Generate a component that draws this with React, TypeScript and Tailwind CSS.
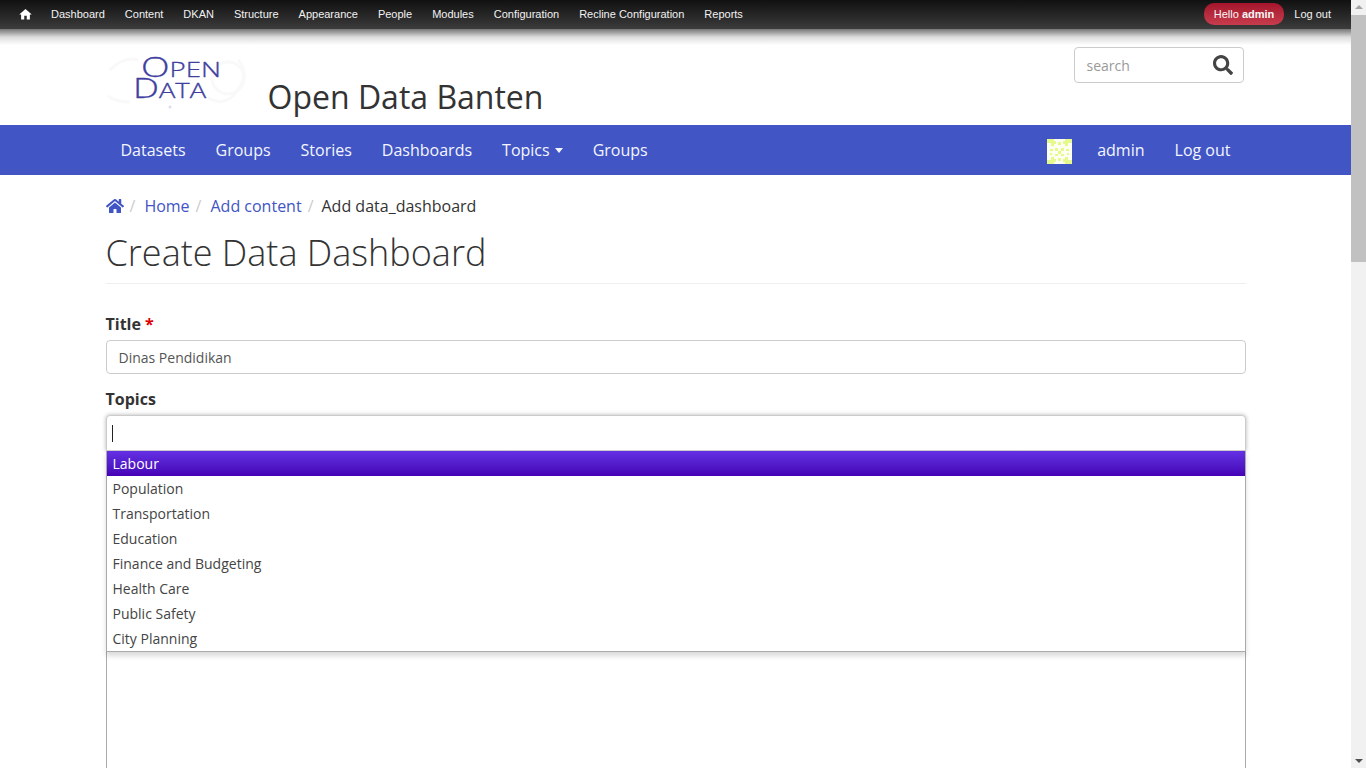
import React from 'react';
import { FaHome, FaSearch } from 'react-icons/fa';
import { MdHome } from 'react-icons/md';

const toolbarLinks = ['Dashboard', 'Content', 'DKAN', 'Structure', 'Appearance', 'People', 'Modules', 'Configuration', 'Recline Configuration', 'Reports'];
const topics = ['Population', 'Transportation', 'Education', 'Finance and Budgeting', 'Health Care', 'Public Safety', 'City Planning'];

const AdminToolbar: React.FC = () => (
  <div className="flex h-[29px] items-center bg-gradient-to-b from-[#111111] to-[#3c3c3c] pb-[1px] font-['Liberation_Sans',sans-serif] text-[11px] text-[#f2f2f2]">
    <MdHome className="ml-[18px] mr-[18px] text-white" size={15} />
    <div className="flex gap-[20px]">
      {toolbarLinks.map((link) => (
        <span key={link}>{link}</span>
      ))}
    </div>
    <span className="ml-auto rounded-[10px] bg-gradient-to-b from-[#a5142c] to-[#c73c4d] px-[10px] py-[3px] text-[#f6f6f6]">
      Hello <b>admin</b>
    </span>
    <span className="ml-[10px] mr-[20px]">Log out</span>
  </div>
);

// logo artwork, the faint wisps sit behind the lettering
const Logo: React.FC = () => (
  <svg width="142" height="62" viewBox="106 50 142 62" className="mt-[5px] shrink-0">
    <g fill="none" stroke="#f9f9f9" strokeWidth="3">
      <path d="M110 70q14-14 28-10M108 96q8 6 22 6" />
      <path d="M208 98q18 10 30-8t0-30" />
      <circle cx="228" cy="78" r="16" />
    </g>
    <circle cx="170" cy="107" r="1.5" fill="#dcdcf0" />
    <g fill="#3f3f9f" fontFamily="'Open Sans', sans-serif" fontWeight="300" stroke="#3f3f9f" strokeWidth="0.3">
      <text x="141" y="77" fontSize="20" textLength="80" lengthAdjust="spacingAndGlyphs">
        <tspan fontSize="27">O</tspan>PEN
      </text>
      <text x="133" y="97.5" fontSize="20" textLength="73" lengthAdjust="spacingAndGlyphs">
        <tspan fontSize="27">D</tspan>ATA
      </text>
    </g>
  </svg>
);

const Avatar: React.FC = () => (
  <svg width="25" height="25" viewBox="0 0 25 25" className="mr-[25px] mt-[2px]">
    <rect width="25" height="25" fill="#fdfff0" />
    <path d="M0 0h7v2h2v3h-2v2h-3v-3h-4zM25 0h-7v2h-2v3h2v2h3v-3h4zM0 25h7v-2h2v-3h-2v-2h-3v3h-4zM25 25h-7v-2h-2v-3h2v-2h3v3h4z" fill="#e6f98e" />
    <path d="M11 3h3v3h-3zM8 9h3v3h-3zM14 9h3v3h-3zM11 12h3v3h-3zM8 15h3v2h-3zM14 15h3v2h-3zM3 10h3v2h-3zM19 10h3v2h-3zM3 14h2v2h-2zM20 14h2v2h-2zM11 19h3v3h-3z" fill="#e6f98e" />
  </svg>
);

const App: React.FC = () => {
  return (
    <div className="flex h-screen overflow-hidden bg-white font-['Open_Sans',sans-serif] text-[#333333]">
      <div className="min-w-0 flex-1 overflow-hidden">
        <AdminToolbar />
        <div className="h-[16px] bg-gradient-to-b from-[#777777] via-[#dcdcdc] via-50% to-white" />

        <div className="h-[80px]">
          <div className="mx-auto flex w-[1140px] justify-between">
            <div className="flex items-start">
              <Logo />
              <h2 className="ml-[20px] mt-[27px] text-[32px] leading-[50px]">Open Data Banten</h2>
            </div>
            <div className="mr-[2px] mt-[2px] flex h-[36px] w-[170px] items-center justify-between rounded-[4px] border border-[#cccccc] pl-[12px] pr-[10px]">
              <span className="text-[14px] text-[#999999]">search</span>
              <FaSearch className="text-[#444444]" size={20} />
            </div>
          </div>
        </div>

        <nav className="h-[50px] bg-[#4155c4] text-[16px] text-[#f4f6ff]">
          <div className="mx-auto flex h-full w-[1140px] items-center px-[15px]">
            <div className="flex gap-[30px]">
              <span>Datasets</span>
              <span>Groups</span>
              <span>Stories</span>
              <span>Dashboards</span>
              <span className="flex items-center gap-[5px]">
                Topics
                <span className="h-0 w-0 border-x-[4px] border-t-[5px] border-x-transparent border-t-[#f4f6ff]" />
              </span>
              <span>Groups</span>
            </div>
            <div className="ml-auto flex items-center">
              <Avatar />
              <span className="mr-[30px]">admin</span>
              <span>Log out</span>
            </div>
          </div>
        </nav>

        <main className="mx-auto w-[1140px]">
          <div className="flex h-[62px] items-center pb-[1px] text-[16px]">
            <FaHome className="text-[#4155c4]" size={18} />
            <span className="mx-[6px] text-[#cccccc]">/</span>
            <span className="ml-[3px] text-[#4155c4]">Home</span>
            <span className="mx-[6px] text-[#cccccc]">/</span>
            <span className="ml-[3px] text-[#4155c4]">Add content</span>
            <span className="mx-[6px] text-[#cccccc]">/</span>
            <span className="ml-[2px]">Add data_dashboard</span>
          </div>
          <h1 className="h-[47px] border-b border-[#eeeeee] text-[36px] font-light leading-[32px]">Create Data Dashboard</h1>

          <form className="mt-[29px]">
            <label className="block text-[16px] font-bold leading-[22px]">
              Title <span className="text-[#e00000]">*</span>
            </label>
            <div className="mt-[5px] flex h-[34px] items-center rounded-[4px] border border-[#cccccc] px-[12px] text-[14px] text-[#555555]">
              Dinas Pendidikan
            </div>
            <label className="mt-[14px] block text-[16px] font-bold leading-[22px]">Topics</label>
            <div className="relative mt-[5px]">
              <div className="relative z-10 flex h-[36px] items-center rounded-t-[4px] border border-[#cccccc] bg-white pl-[5px] shadow-[0_0_4px_rgba(0,0,0,0.3)]">
                <div className="h-[17px] w-px bg-[#222222]" />
              </div>
              <ul className="absolute inset-x-0 top-[36px] z-20 border-x border-b border-[#aaaaaa] bg-white text-[14px] leading-[25px] text-[#444444] shadow-[0_4px_5px_rgba(0,0,0,0.15)]">
                <li className="bg-gradient-to-b from-[#6430e4] to-[#4500b5] pl-[6px] text-white">Labour</li>
                {topics.map((topic) => (
                  <li key={topic} className="pl-[6px]">{topic}</li>
                ))}
              </ul>
              <div className="h-[400px] border-x border-[#aaaaaa]" />
            </div>
          </form>
        </main>
      </div>

      <div className="flex h-screen w-[15px] shrink-0 flex-col items-center bg-[#f1f1f1]">
        <div className="mt-[5px] h-0 w-0 border-x-[4px] border-b-[4px] border-x-transparent border-b-[#a3a3a3]" />
        <div className="mt-[6px] h-[247px] w-full bg-[#c1c1c1]" />
        <div className="mb-[5px] mt-auto h-0 w-0 border-x-[4px] border-t-[4px] border-x-transparent border-t-[#505050]" />
      </div>
    </div>
  );
};

export default App;
